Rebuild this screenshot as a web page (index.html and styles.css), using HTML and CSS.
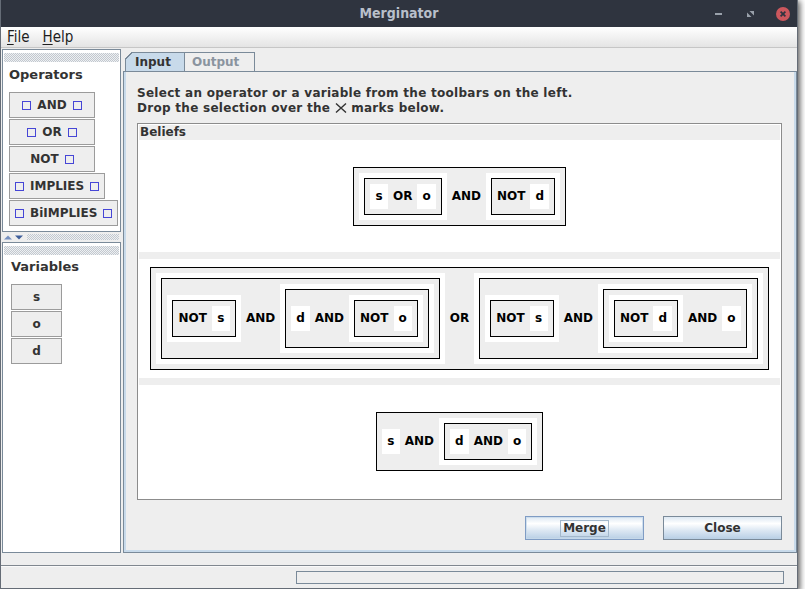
FILE: index.html
```html
<!DOCTYPE html>
<html lang="en">
<head>
<meta charset="utf-8">
<title>Merginator</title>
<link rel="stylesheet" href="styles.css">
</head>
<body>
<div class="window">
  <header class="titlebar">
    <span class="tb-spacer"></span>
    <h1 class="title">Merginator</h1>
    <div class="controls">
      <svg class="ctl" width="16" height="16" viewBox="0 0 16 16"><rect x="4" y="7" width="7" height="2" fill="#9aa1ab"/></svg>
      <svg class="ctl" width="16" height="16" viewBox="0 0 16 16"><path d="M6.5 5H11v4.5z M4 6.5V11h4.5z" fill="#9aa1ab"/></svg>
      <svg class="ctl" width="16" height="16" viewBox="0 0 16 16"><circle cx="8" cy="8" r="7" fill="#cc575d"/><path d="M5.6 5.6l4.8 4.8M10.4 5.6l-4.8 4.8" stroke="#2f343f" stroke-width="1.7"/></svg>
    </div>
  </header>

  <nav class="menubar">
    <span class="menu"><u>F</u>ile</span>
    <span class="menu"><u>H</u>elp</span>
  </nav>

  <div class="workspace">
    <aside class="leftcol">
      <section class="toolbar ops">
        <div class="grip"></div>
        <div class="tb-title">Operators</div>
        <div class="tb-buttons">
          <button class="tb-btn"><i class="sq"></i>AND<i class="sq"></i></button>
          <button class="tb-btn"><i class="sq"></i>OR<i class="sq"></i></button>
          <button class="tb-btn">NOT<i class="sq"></i></button>
          <button class="tb-btn"><i class="sq"></i>IMPLIES<i class="sq"></i></button>
          <button class="tb-btn"><i class="sq"></i>BiIMPLIES<i class="sq"></i></button>
        </div>
      </section>
      <div class="divider">
        <svg width="20" height="5" viewBox="0 0 20 5"><path d="M0 4.5L4 0.5L8 4.5z" fill="#7690c0"/><path d="M11 0.5h8l-4 4z" fill="#3f5f9b"/></svg>
        <div class="divider-grip"></div>
      </div>
      <section class="toolbar vars">
        <div class="grip"></div>
        <div class="tb-title">Variables</div>
        <div class="tb-buttons">
          <button class="tb-btn var-btn">s</button>
          <button class="tb-btn var-btn">o</button>
          <button class="tb-btn var-btn">d</button>
        </div>
      </section>
    </aside>

    <main class="tabpane">
      <div class="tabs">
        <div class="tab active">Input</div>
        <div class="tab inactive">Output</div>
      </div>
      <div class="tabcontent">
        <p class="hint">Select an operator or a variable from the toolbars on the left.<br>Drop the selection over the <svg class="xmark" width="12" height="10" viewBox="0 0 12 10"><path d="M1 0.5L11 9.5M11 0.5L1 9.5" stroke="#333" stroke-width="1.4"/></svg> marks below.</p>

        <div class="beliefs">
          <div class="beliefs-head">Beliefs</div>
          <div class="belief-list">
            <div class="belief">
              <div class="node">
                <div class="slot"><div class="node"><span class="leaf">s</span><span class="op">OR</span><span class="leaf">o</span></div></div>
                <span class="op">AND</span>
                <div class="slot"><div class="node"><span class="op">NOT</span><span class="leaf">d</span></div></div>
              </div>
            </div>

            <div class="belief">
              <div class="node">
                <div class="slot"><div class="node">
                  <div class="slot"><div class="node"><span class="op">NOT</span><span class="leaf">s</span></div></div>
                  <span class="op">AND</span>
                  <div class="slot"><div class="node">
                    <span class="leaf">d</span><span class="op">AND</span>
                    <div class="slot"><div class="node"><span class="op">NOT</span><span class="leaf">o</span></div></div>
                  </div></div>
                </div></div>
                <span class="op">OR</span>
                <div class="slot"><div class="node">
                  <div class="slot"><div class="node"><span class="op">NOT</span><span class="leaf">s</span></div></div>
                  <span class="op">AND</span>
                  <div class="slot"><div class="node">
                    <div class="slot"><div class="node"><span class="op">NOT</span><span class="leaf">d</span></div></div>
                    <span class="op">AND</span><span class="leaf">o</span>
                  </div></div>
                </div></div>
              </div>
            </div>

            <div class="belief">
              <div class="node">
                <span class="leaf">s</span><span class="op">AND</span>
                <div class="slot"><div class="node"><span class="leaf">d</span><span class="op">AND</span><span class="leaf">o</span></div></div>
              </div>
            </div>
          </div>
        </div>

        <div class="actions">
          <button class="btn default"><span class="focus">Merge</span></button>
          <button class="btn">Close</button>
        </div>
      </div>
    </main>
  </div>

  <footer class="statusbar">
    <div class="progress"></div>
  </footer>
</div>
</body>
</html>
```

FILE: styles.css
```css
* { box-sizing: border-box; margin: 0; padding: 0; }

html, body { background: #fff; }

body {
  font-family: "DejaVu Sans", "Liberation Sans", sans-serif;
  font-size: 12px;
  font-weight: bold;
  color: #333;
}

button { font: inherit; color: inherit; }

.window {
  width: 798px;
  height: 589px;
  display: flex;
  flex-direction: column;
  background: #eeeeee;
  border: 1px solid #656c76;
  border-top: 0;
  box-shadow: 1px 2px 6px 1px rgba(0, 0, 0, 0.65);
}

/* title bar */
.titlebar {
  height: 27px;
  flex: none;
  background: #2f343f;
  display: grid;
  grid-template-columns: 1fr auto 1fr;
  align-items: center;
}
.title {
  font-family: "DejaVu Sans Condensed", "DejaVu Sans", sans-serif;
  font-size: 14px;
  font-weight: bold;
  color: #b8bfca;
  line-height: 27px;
}
.controls {
  justify-self: end;
  align-self: start;
  margin-top: 6px;
  padding-right: 6px;
  display: flex;
  gap: 16px;
}
.ctl { display: block; }

/* menu bar */
.menubar {
  height: 21px;
  flex: none;
  display: flex;
  align-items: center;
  background: linear-gradient(#ffffff, #e4e4e4);
  border-bottom: 1px solid #c6c6c6;
  font-family: "DejaVu Sans Condensed", "DejaVu Sans", sans-serif;
  font-weight: normal;
  font-size: 15px;
  color: #1e1e1e;
}
.menu { padding: 0 7px 0 6px; }
.menu u { text-decoration-thickness: 1px; text-underline-offset: 2px; }

/* workspace */
.workspace {
  flex: 1;
  display: flex;
  gap: 2px;
  padding: 1px 0 12px 1px;
  min-height: 0;
}

.leftcol {
  width: 119px;
  flex: none;
  display: flex;
  flex-direction: column;
}

.toolbar {
  background: #fff;
  border: 1px solid #7a8a99;
}
.ops { height: 183px; flex: none; padding-left: 6px; }
.vars { flex: 1; padding-left: 8px; }

.grip {
  height: 9px;
  margin: 3px 1px 0 0;
  background: repeating-conic-gradient(#c2c8cf 0 25%, #eef0f2 0 50%) 0 0 / 2px 2px;
}
.ops .grip { margin-left: -5px; }
.vars .grip { margin-left: -7px; }

.tb-title {
  font-size: 13px;
  line-height: 15px;
  margin-top: 5px;
  color: #333;
}
.vars .tb-title { margin-top: 4px; }

.tb-buttons {
  margin-top: 10px;
  display: flex;
  flex-direction: column;
  align-items: flex-start;
  gap: 1px;
}
.tb-btn {
  height: 26px;
  min-width: 86px;
  padding: 0 5px;
  display: flex;
  align-items: center;
  justify-content: center;
  gap: 6px;
  background: #eeeeee;
  border: 1px solid #9b9b9b;
  color: #333;
}
.var-btn { min-width: 0; width: 51px; }

.sq {
  display: block;
  width: 9px;
  height: 9px;
  border: 1px solid #4646d6;
}

.divider {
  height: 10px;
  flex: none;
  display: flex;
  align-items: center;
  gap: 3px;
  padding-left: 2px;
}
.divider svg { display: block; }
.divider-grip {
  flex: 1;
  height: 6px;
  margin-right: 2px;
  background: repeating-conic-gradient(#c2c8cf 0 25%, #eef0f2 0 50%) 0 0 / 2px 2px;
}

/* tabbed pane */
.tabpane {
  flex: 1;
  display: flex;
  flex-direction: column;
  margin-top: 3px;
}
.tabs {
  display: flex;
  padding-left: 2px;
  height: 19px;
  flex: none;
}
.tab {
  position: relative;
  height: 19px;
  line-height: 18px;
  border: 1px solid #7a8a99;
  border-bottom: 0;
}
.tab.active {
  width: 60px;
  padding-left: 9px;
  background: #c8daea;
  color: #333;
}
.tab.active::before {
  content: "";
  position: absolute;
  left: -1px;
  top: -1px;
  width: 7px;
  height: 7px;
  background: linear-gradient(135deg, #eeeeee 0 44%, #7a8a99 44% 62%, transparent 62%);
}
.tab.inactive {
  width: 70px;
  padding-left: 7px;
  border-left: 0;
  color: #8a949f;
}

.tabcontent {
  flex: 1;
  display: flex;
  flex-direction: column;
  border: 1px solid #7a8a99;
  box-shadow: inset 2px 0 #c8daea, inset -2px 0 #c8daea, inset 0 -2px #c8daea;
  padding: 14px 14px 0 13px;
}

.hint {
  line-height: 15px;
  letter-spacing: 0.28px;
  color: #333;
}
.xmark { vertical-align: -1px; }

.beliefs {
  margin-top: 7px;
  border: 1px solid #8c8c8c;
  padding: 1px;
  background: #fff;
}
.beliefs-head {
  height: 15px;
  line-height: 15px;
  padding-left: 1px;
  background: #eeeeee;
  color: #333;
}
.belief-list {
  display: flex;
  flex-direction: column;
  gap: 7px;
  padding-bottom: 1px;
  background: #fff;
}
.belief {
  min-height: 112px;
  padding: 8px 0;
  background: #fff;
  display: flex;
  align-items: center;
  justify-content: center;
  color: #000;
  position: relative;
}
.belief + .belief { box-shadow: 0 -7px 0 #eeeeee; }

.node {
  display: flex;
  align-items: center;
  gap: 5px;
  padding: 5px;
  border: 1px solid #000;
  background: #eeeeee;
}
.slot {
  padding: 5px;
  background: #fff;
}
.leaf {
  display: block;
  min-width: 18px;
  padding: 5px;
  line-height: 15px;
  text-align: center;
  background: #fff;
}
.op {
  display: block;
  line-height: 15px;
}

.actions {
  display: flex;
  justify-content: flex-end;
  gap: 19px;
  margin-top: 16px;
}
.btn {
  width: 119px;
  height: 24px;
  border: 1px solid #7a8a99;
  background: linear-gradient(#dde8f3 0%, #ffffff 30%, #dde8f3 60%, #b8cfe5 100%);
  color: #333;
  display: flex;
  align-items: center;
  justify-content: center;
}
.btn.default {
  border-color: #7f9cc4;
  box-shadow: inset 0 0 0 1px rgba(200, 218, 234, 0.8);
}
.focus {
  line-height: 15px;
  padding: 0 2px;
  outline: 1px solid #a3b8cc;
}

/* status bar */
.statusbar {
  height: 23px;
  flex: none;
  border-top: 1px solid #80878f;
  box-shadow: inset 0 1px #fafafa;
  display: flex;
  justify-content: flex-end;
  padding: 5px 13px 0 0;
}
.progress {
  width: 488px;
  height: 13px;
  border: 1px solid #7a8a99;
  background: #eeeeee;
}
```
